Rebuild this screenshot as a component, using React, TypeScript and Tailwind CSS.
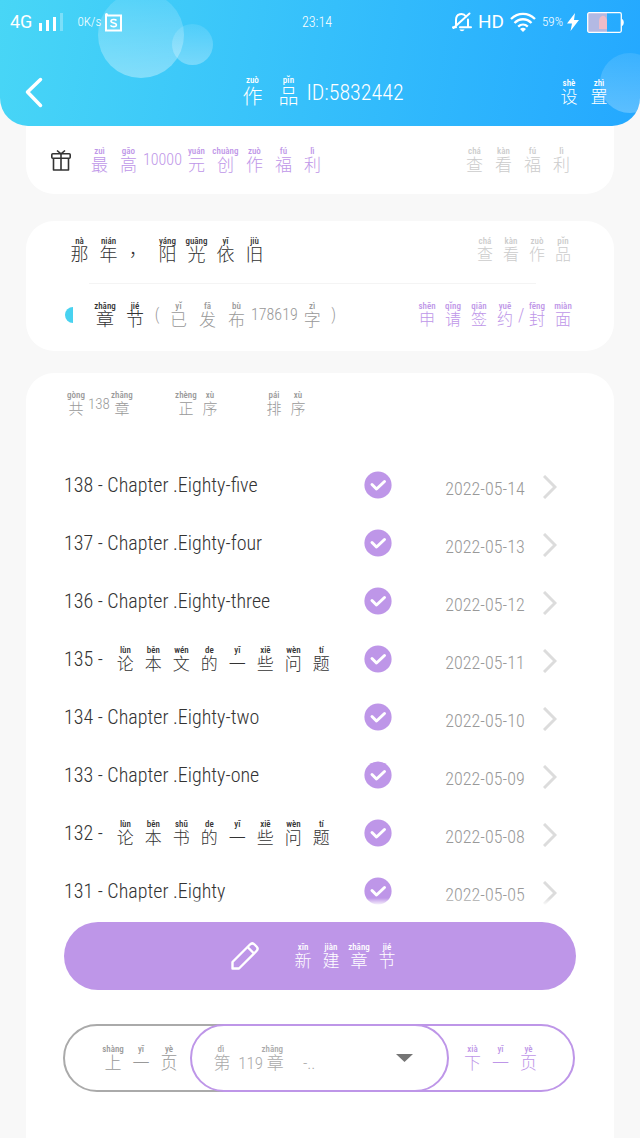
import { useState } from 'react';
import { clsx } from 'clsx';

// [character, pinyin]; an entry without pinyin is a run of plain text
type Glyph = [string, string?];

interface PinyinProps {
  text: Glyph[];
  cell?: string;
  size?: string;
  plain?: string;
  className?: string;
}

interface Chapter {
  no: number;
  title?: string;
  glyphs?: Glyph[];
  date: string;
}

const aboutSome: Glyph[] = [
  ['的', 'de'],
  ['一', 'yī'],
  ['些', 'xiē'],
  ['问', 'wèn'],
  ['题', 'tí'],
];

const chapters: Chapter[] = [
  { no: 138, title: 'Chapter .Eighty-five', date: '2022-05-14' },
  { no: 137, title: 'Chapter .Eighty-four', date: '2022-05-13' },
  { no: 136, title: 'Chapter .Eighty-three', date: '2022-05-12' },
  { no: 135, glyphs: [['论', 'lùn'], ['本', 'běn'], ['文', 'wén'], ...aboutSome], date: '2022-05-11' },
  { no: 134, title: 'Chapter .Eighty-two', date: '2022-05-10' },
  { no: 133, title: 'Chapter .Eighty-one', date: '2022-05-09' },
  { no: 132, glyphs: [['论', 'lùn'], ['本', 'běn'], ['书', 'shū'], ...aboutSome], date: '2022-05-08' },
  { no: 131, title: 'Chapter .Eighty', date: '2022-05-05' },
];

function Pinyin({ text, cell = 'w-7', size = 'text-[17px] leading-[18px]', plain = 'text-xl', className }: PinyinProps) {
  return (
    <span className={clsx('flex items-center whitespace-nowrap', className)}>
      {text.map(([char, reading], i) =>
        reading ? (
          <ruby key={i} className={clsx('flex flex-col-reverse items-center', cell)}>
            <span className={size}>{char}</span>
            <rt className="block text-[9px] font-medium leading-[10px]">{reading}</rt>
          </ruby>
        ) : (
          <span key={i} className={clsx('text-center', plain)}>
            {char}
          </span>
        )
      )}
    </span>
  );
}

function StatusBar() {
  return (
    <div className="grid h-11 grid-cols-[1fr_auto_1fr] items-center pl-[10px] pr-4">
      <div className="flex items-center">
        <span className="font-[Roboto] text-lg font-normal">4G</span>
        <svg className="ml-1.5 h-[18px] w-[25px]" viewBox="0 0 25 18" fill="currentColor" aria-hidden="true">
          <rect x="1" y="10" width="3" height="8" />
          <rect x="8" y="7" width="3" height="11" />
          <rect x="15" y="4" width="3" height="14" />
          <rect x="22" y="0" width="3" height="18" opacity="0.3" />
        </svg>
        <span className="ml-3.5 text-[13px]">0K/s</span>
        <svg className="ml-1 h-[19px] w-[17px]" viewBox="0 0 17 19" fill="none" stroke="currentColor" aria-hidden="true">
          <path d="M1 2.5H16V17.5H1Z" strokeWidth="2" />
          <circle cx="1.5" cy="1.5" r="1.5" fill="currentColor" stroke="none" />
          <path d="M11.5 7.5C10.500 6 6 6 6 8.300C6 10.600 11.400 9.500 11.400 11.900C11.400 14.200 6.500 14 5.500 12.300" strokeWidth="1.600" />
        </svg>
      </div>
      <span className="text-sm">23:14</span>
      <div className="flex items-center justify-end">
        <svg className="h-5 w-5" viewBox="0 0 20 20" fill="none" stroke="currentColor" strokeWidth="2" strokeLinecap="round" aria-hidden="true">
          <path d="M4 12.500V8C4 1.500 11 .5 14 4.500" />
          <path d="M16 7.500V15.200H19M8 15.200H16" />
          <path d="M17.500 1.500L1.500 16" />
          <path d="M1 15.200H4" />
          <path d="M7.500 17.500H12.500C11.500 19.800 8.500 19.800 7.500 17.500Z" fill="currentColor" stroke="none" />
        </svg>
        <span className="ml-1.5 font-[Roboto] text-[19px] font-normal">HD</span>
        <svg className="ml-1.5 h-5 w-[26px]" viewBox="0 0 26 20" fill="none" stroke="currentColor" strokeWidth="2.300" aria-hidden="true">
          <path d="M1 7C8 .2 18 .2 25 7" />
          <path d="M4.500 11C9.500 6 16.500 6 21.500 11" />
          <path d="M8.200 14.600C11 12 15 12 17.800 14.600" />
          <path d="M10 17C12 15.300 14 15.300 16 17L13 20Z" fill="currentColor" stroke="none" />
        </svg>
        <span className="ml-1.5 text-[13px]">59%</span>
        <svg className="ml-1 h-[18px] w-3" viewBox="0 0 12 18" fill="currentColor" aria-hidden="true">
          <path d="M8 0L0 10.500H5L3.500 18L12 7H7Z" />
        </svg>
        <svg className="ml-2 h-[21px] w-[37px]" viewBox="0 0 37 21" aria-hidden="true">
          <rect x="1" y="1" width="19" height="19" fill="#b3b9e3" />
          <path d="M12 9C12 5 16 2 18.500 5L20 8V17H12Z" fill="#eebcc9" />
          <rect x=".7" y=".7" width="33.600" height="19.600" rx="1.500" fill="none" stroke="#fff" strokeWidth="1.300" />
          <path d="M34.500 7C37.500 7 37.500 14 34.500 14Z" fill="#fff" />
        </svg>
      </div>
    </div>
  );
}

function Header() {
  return (
    <header className="relative h-[126px] overflow-hidden rounded-b-[28px] bg-linear-100 from-[#48d6f6] to-[#24a8ff] text-white">
      <div className="absolute -top-2 left-[98px] size-[86px] rounded-full bg-linear-to-b from-white/10 to-white/35" />
      <div className="absolute left-[172px] top-6 size-[41px] rounded-full bg-linear-to-b from-white/10 to-white/30" />
      <div className="absolute -right-5 top-[53px] size-[60px] rounded-full bg-linear-to-b from-white/10 to-white/25" />
      <div className="relative">
        <StatusBar />
        <nav className="grid grid-cols-[1fr_auto_1fr] items-center pl-6 pr-[26px] pt-7">
          <button type="button" aria-label="返回" className="justify-self-start">
            <svg className="h-10 w-5" viewBox="0 0 20 40" fill="none" stroke="currentColor" strokeWidth="3.500" strokeLinecap="round" strokeLinejoin="round">
              <path d="M16.500 7.500L3.500 20L16.500 33.500" />
            </svg>
          </button>
          <h1>
            <Pinyin
              text={[['作', 'zuò'], ['品', 'pǐn'], ['ID:5832442']]}
              cell="w-9"
              size="text-xl leading-6"
              plain="text-[22px]"
            />
          </h1>
          <button type="button" className="justify-self-end">
            <Pinyin text={[['设', 'shè'], ['置', 'zhì']]} cell="w-[30px]" />
          </button>
        </nav>
      </div>
    </header>
  );
}

function GiftIcon() {
  return (
    <svg className="h-[22px] w-5" viewBox="0 0 20 22" fill="none" stroke="#333" strokeWidth="1.600" strokeLinejoin="round" aria-hidden="true">
      <rect x=".8" y="4.800" width="18.400" height="4.400" rx="1" />
      <path d="M2.500 9.200V21H17.500V9.200M10 4.800V21M6 1.500L10 4.800L14 1.500" />
    </svg>
  );
}

function ChapterRow({ chapter }: { chapter: Chapter }) {
  return (
    <li>
      <a href={`#chapter-${chapter.no}`} className="flex h-[58px] items-center">
        <span className="flex flex-1 items-center whitespace-pre text-xl text-[#333]">
          {chapter.no} - {chapter.title}
          {chapter.glyphs && <Pinyin text={chapter.glyphs} className="ml-1" />}
        </span>
        <svg className="size-7" viewBox="0 0 28 28" fill="none" role="img" aria-label="已发布">
          <circle cx="14" cy="14" r="13.600" fill="#be96e8" />
          <path d="M8 13.500L12.500 18L20.500 10.500" stroke="#fff" strokeWidth="3" strokeLinecap="round" strokeLinejoin="round" />
        </svg>
        <span className="flex w-[222px] items-center justify-center gap-[18px] pr-1 pt-1 text-lg text-[#999]">
          <time className="pt-1">{chapter.date}</time>
          <svg className="h-6 w-3.5" viewBox="0 0 14 24" fill="none" stroke="#dcdcdc" strokeWidth="3" aria-hidden="true">
            <path d="M1 1L12 12L1 23" />
          </svg>
        </span>
      </a>
    </li>
  );
}

function Pager() {
  const [page, setPage] = useState('119');

  return (
    <div className="mt-[34px] flex h-[68px] pl-[37px] pr-[39px]">
      <button type="button" className="-mr-[34px] flex flex-1 items-center rounded-l-full border-2 border-[#aaa] pl-[34px] pr-2 text-[#999]">
        <Pinyin text={[['上', 'shàng'], ['一', 'yī'], ['页', 'yè']]} />
      </button>
      <label className="relative z-10 flex w-[259px] items-center rounded-full border-2 border-[#be96e8] bg-white pl-[22px] pr-[34px] text-[#aaa]">
        <span className="flex flex-1 flex-col">
          <span className="flex gap-[28px] pl-1 text-[9px] font-medium leading-[10px]">
            <span className="w-4">dì</span>
            <span>zhāng</span>
          </span>
          <select
            aria-label="选择章节"
            value={page}
            onChange={(e) => setPage(e.target.value)}
            className="w-full appearance-none bg-transparent text-[17px] leading-[18px] outline-none"
          >
            <option value="119">第&nbsp; 119 章&nbsp;&nbsp; &nbsp;&nbsp;-..</option>
            <option value="99">第&nbsp; 99 章&nbsp;&nbsp; &nbsp;&nbsp;-..</option>
          </select>
        </span>
        <svg className="h-2 w-[17px]" viewBox="0 0 17 8" fill="#757575" aria-hidden="true">
          <path d="M0 0H17L8.500 8Z" />
        </svg>
      </label>
      <button type="button" className="-ml-[34px] flex flex-1 items-center rounded-r-full border-2 border-[#be96e8] pl-[42px] text-[#be96e8]">
        <Pinyin text={[['下', 'xià'], ['一', 'yī'], ['页', 'yè']]} />
      </button>
    </div>
  );
}

export default function App() {
  return (
    <div className="flex min-h-screen flex-col bg-[#f8f8f8] font-['Liberation_Sans_Narrow','Roboto_Condensed','Open_Sans_Condensed','Noto_Sans_CJK_SC',sans-serif] font-light">
      <Header />

      <main className="flex flex-1 flex-col px-[26px]">
        {/* Welfare banner */}
        <section className="flex h-[68px] items-center rounded-b-[28px] bg-white pl-[25px] pr-[38px]">
          <GiftIcon />
          <Pinyin
            text={[['最', 'zuì'], ['高', 'gāo'], ['10000'], ['元', 'yuán'], ['创', 'chuàng'], ['作', 'zuò'], ['福', 'fú'], ['利', 'lì']]}
            cell="w-[29px]"
            plain="text-base"
            className="ml-[14px] flex-1 text-[#be96e8]"
          />
          <a href="#welfare" className="text-[#ccc]">
            <Pinyin text={[['查', 'chá'], ['看', 'kàn'], ['福', 'fú'], ['利', 'lì']]} cell="w-[29px]" />
          </a>
        </section>

        {/* Work summary */}
        <section className="mt-[27px] rounded-[28px] bg-white pb-2.5 pl-[39px] pr-[38px]">
          <div className="flex h-[62px] items-center justify-between pb-1">
            <h2 className="text-[#333]">
              <Pinyin
                text={[['那', 'nà'], ['年', 'nián'], ['，'], ['阳', 'yáng'], ['光', 'guāng'], ['依', 'yī'], ['旧', 'jiù']]}
                cell="w-[29px]"
                size="text-lg leading-[18px]"
                plain="w-[30px] text-lg"
              />
            </h2>
            <a href="#work" className="text-[#ccc]">
              <Pinyin text={[['查', 'chá'], ['看', 'kàn'], ['作', 'zuò'], ['品', 'pǐn']]} cell="w-[26px]" size="text-base leading-[18px]" />
            </a>
          </div>
          <div className="ml-6 mr-10 h-px bg-[#f4f4f4]" />
          <div className="flex h-[57px] items-center pt-1">
            <span className="h-4 w-2 rounded-l-full bg-[#48d2f0]" />
            <h2 className="ml-[17px] text-[#333]">
              <Pinyin text={[['章', 'zhāng'], ['节', 'jié']]} cell="w-[30px]" size="text-lg leading-[18px]" />
            </h2>
            <span className="flex-1 text-[#999]">
              <Pinyin
                text={[['('], ['已', 'yǐ'], ['发', 'fā'], ['布', 'bù'], ['178619'], ['字', 'zì'], [')']]}
                cell="w-[29px]"
                plain="min-w-[14px] text-base"
              />
            </span>
            <a href="#contract" className="text-[#be96e8]">
              <Pinyin
                text={[['申', 'shēn'], ['请', 'qǐng'], ['签', 'qiān'], ['约', 'yuē'], ['/'], ['封', 'fēng'], ['面', 'miàn']]}
                cell="w-[26px]"
                size="text-base leading-[18px]"
                plain="w-1.5 text-lg"
              />
            </a>
          </div>
        </section>

        {/* Chapters */}
        <section className="mt-[22px] flex-1 rounded-t-[28px] bg-white">
          <div className="flex h-[83px] items-start gap-10 pl-[38px] pt-[17px] text-[#999]">
            <Pinyin text={[['共', 'gòng'], ['138'], ['章', 'zhāng']]} cell="w-6" size="text-[15px] leading-[18px]" plain="text-[15px]" />
            <button type="button">
              <Pinyin text={[['正', 'zhèng'], ['序', 'xù']]} cell="w-6" size="text-[15px] leading-[18px]" />
            </button>
            <button type="button">
              <Pinyin text={[['排', 'pái'], ['序', 'xù']]} cell="w-6" size="text-[15px] leading-[18px]" />
            </button>
          </div>

          <div className="relative">
            <ul className="pl-[38px]">
              {chapters.map((chapter) => (
                <ChapterRow key={chapter.no} chapter={chapter} />
              ))}
            </ul>
            {/* Fade out at the bottom of the list */}
            <div className="pointer-events-none absolute inset-x-0 bottom-0 h-[22px] bg-linear-to-b from-transparent to-white to-35%" />
          </div>

          <div className="mt-0.5 px-[38px]">
            <button type="button" className="flex h-[68px] w-full items-center justify-center gap-[30px] rounded-full bg-[#be96e8] pr-2 text-white">
              <svg className="size-7" viewBox="0 0 28 28" fill="none" stroke="currentColor" strokeWidth="2.400" strokeLinejoin="round" aria-hidden="true">
                <path d="M1.500 26.500V20L19 2.500C20.500 1 22 1 23.500 2.500L25.500 4.500C27 6 27 7.500 25.500 9L8 26.500Z" />
                <path d="M16.500 5L23 11.500" />
              </svg>
              <Pinyin text={[['新', 'xīn'], ['建', 'jiàn'], ['章', 'zhāng'], ['节', 'jié']]} />
            </button>
          </div>

          <Pager />
        </section>
      </main>
    </div>
  );
}
